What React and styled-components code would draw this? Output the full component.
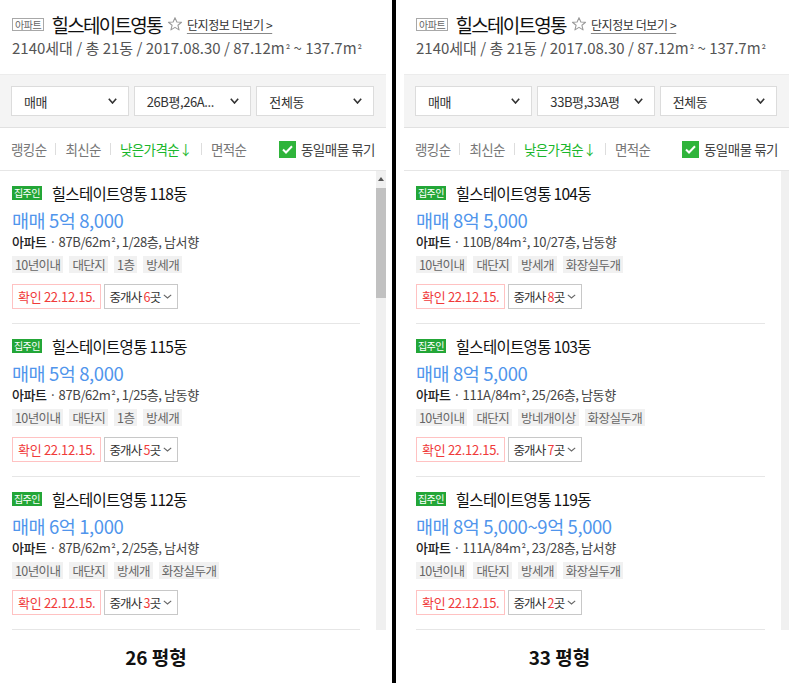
import React from "react";
import styled, { createGlobalStyle } from "styled-components";

const GlobalStyle = createGlobalStyle`
  html, body {
    margin: 0;
    padding: 0;
    background: #fff;
  }
  body {
    font-family: "Noto Sans CJK KR", "Noto Sans", sans-serif;
    color: #222;
  }
`;

const Page = styled.div`
  display: flex;
  height: 683px;
  overflow: hidden;
`;

const Column = styled.div`
  width: ${(p) => p.$w}px;
  display: flex;
  flex-direction: column;
`;

const Divider = styled.div`
  width: 4px;
  background: #000;
  margin: 0 8px 0 6px;
`;

const Panel = styled.div`
  height: 630px;
  display: flex;
  flex-direction: column;
  overflow: hidden;
`;

// header with complex name
const Header = styled.div`
  height: 74px;
  box-sizing: border-box;
  padding: 12px 12px 0;
`;

const TitleRow = styled.div`
  display: flex;
  align-items: center;
  height: 24px;
  white-space: nowrap;
`;

const TypeBadge = styled.span`
  border: 1px solid #a8a8a8;
  color: #666;
  font-size: 10px;
  line-height: 11px;
  letter-spacing: -0.4px;
  padding: 0 2px;
  margin-right: 7px;
`;

const ComplexName = styled.span`
  font-size: 19px;
  letter-spacing: -1.7px;
  color: #111;
`;

const Star = styled.svg`
  margin: 0 4px 0 5px;
`;

const MoreLink = styled.a`
  font-size: 12px;
  letter-spacing: -0.4px;
  color: #333;
  text-decoration: underline;
  text-decoration-color: #888;
  text-underline-offset: 3px;
`;

const SubInfo = styled.div`
  margin-top: 2px;
  font-size: 15px;
  line-height: 20px;
  letter-spacing: 0;
  color: #555;
  white-space: nowrap;
`;

const Unit = styled.span`
  font-size: 11px;
  letter-spacing: 0;
  margin-left: 1px;
`;

const FilterBar = styled.div`
  background: #f4f4f4;
  border-top: 1px solid #ececec;
  border-bottom: 1px solid #e1e1e1;
  padding: 11px 12px 11px 11px;
  display: grid;
  grid-template-columns: repeat(3, 1fr);
  gap: 5px;
`;

const Select = styled.div`
  height: 30px;
  box-sizing: border-box;
  background: #fff;
  border: 1px solid #dcdcdc;
  display: flex;
  align-items: center;
  justify-content: space-between;
  padding: 0 11px 0 12px;
  font-size: 13px;
  letter-spacing: -0.4px;
  color: #333;
  white-space: nowrap;
`;

const SortBar = styled.div`
  height: 42px;
  border-bottom: 1px solid #e6e6e6;
  display: flex;
  align-items: center;
  padding: 0 11px;
`;

const SortItem = styled.span`
  font-size: 13.5px;
  letter-spacing: -0.6px;
  color: ${(p) => (p.$active ? "#19b62b" : "#777")};
  white-space: nowrap;
`;

const SortSep = styled.span`
  width: 1px;
  height: 12px;
  background: #ddd;
  margin: 0 9px;
`;

const Bundle = styled.label`
  margin-left: auto;
  display: flex;
  align-items: center;
  gap: 5px;
  font-size: 13.5px;
  letter-spacing: -0.5px;
  color: #444;
  white-space: nowrap;
`;

const CheckBox = styled.span`
  width: 17px;
  height: 17px;
  background: #2fb43b;
  display: flex;
  align-items: center;
  justify-content: center;
`;

const ListWrap = styled.div`
  flex: 1;
  min-height: 0;
  display: flex;
`;

const List = styled.div`
  flex: 1;
  overflow: hidden;
  padding: 0 ${(p) => p.$pr}px 0 12px;
`;

const Scrollbar = styled.div`
  width: ${(p) => p.$w}px;
  background: #f0f0f0;
  display: flex;
  flex-direction: column;
  align-items: center;
`;

const ScrollArrow = styled.span`
  margin-top: 6px;
  width: 0;
  height: 0;
  border-left: 3px solid transparent;
  border-right: 3px solid transparent;
  border-bottom: 4px solid #555;
`;

const Thumb = styled.div`
  margin-top: 7px;
  width: 100%;
  height: 110px;
  background: #c1c1c1;
`;

const Item = styled.div`
  padding: 11px 0 14px;
  border-bottom: 1px solid #e6e6e6;
`;

const ItemTitle = styled.div`
  display: flex;
  align-items: center;
  height: 22px;
  font-size: 15.5px;
  letter-spacing: -0.7px;
  color: #111;
  white-space: nowrap;
`;

const OwnerBadge = styled.span`
  background: #23a637;
  color: #fff;
  font-size: 10px;
  letter-spacing: -0.6px;
  line-height: 14px;
  padding: 0 2px;
  margin-right: 10px;
`;

const Price = styled.div`
  margin-top: 4px;
  font-size: 18.5px;
  line-height: 24px;
  letter-spacing: -0.4px;
  color: #5095ec;
  white-space: nowrap;
`;

const Detail = styled.div`
  font-size: 13px;
  line-height: 20px;
  letter-spacing: -0.4px;
  color: #444;
  white-space: nowrap;
  b {
    font-weight: 500;
    color: #222;
  }
`;

const Tags = styled.div`
  margin-top: 4px;
  display: flex;
  gap: 6px;
`;

const Tag = styled.span`
  background: #f1f1f1;
  color: #666;
  font-size: 12.5px;
  letter-spacing: -0.6px;
  line-height: 17px;
  padding: 0 3px;
  white-space: nowrap;
`;

const Actions = styled.div`
  margin-top: 11px;
  display: flex;
  gap: 3px;
`;

const Confirm = styled.span`
  height: 25px;
  box-sizing: border-box;
  border: 1px solid #ffc2c2;
  color: #f03a3a;
  font-size: 13px;
  letter-spacing: -0.3px;
  padding: 0 5px;
  display: flex;
  align-items: center;
  white-space: nowrap;
`;

const Broker = styled.span`
  height: 25px;
  box-sizing: border-box;
  border: 1px solid #c8c8c8;
  color: #333;
  font-size: 12.5px;
  letter-spacing: -0.8px;
  padding: 0 5px 0 4px;
  display: flex;
  align-items: center;
  gap: 3px;
  white-space: nowrap;
  em {
    font-style: normal;
    color: #f03a3a;
  }
`;

const Caption = styled.div`
  flex: 1;
  display: flex;
  align-items: center;
  justify-content: center;
  padding-right: 74px;
  font-size: 19px;
  font-weight: 700;
  color: #111;
`;

const Chevron = ({ w = 9, h = 5, color = "#333", sw = 1.6 }) => (
  <svg width={w} height={h + 1} viewBox={`0 0 ${w} ${h + 1}`}>
    <polyline
      points={`0.8,0.8 ${w / 2},${h} ${w - 0.8},0.8`}
      fill="none"
      stroke={color}
      strokeWidth={sw}
    />
  </svg>
);

const m2 = (
  <>
    m<Unit>²</Unit>
  </>
);

const panels = [
  {
    label: "26 평형",
    size: "26B평,26A...",
    scroll: 10,
    pr: 16,
    thumb: true,
    items: [
      { dong: "118동", price: "매매 5억 8,000", area: "87B/62", floor: "1/28층, 남서향", tags: ["10년이내", "대단지", "1층", "방세개"], brokers: 6 },
      { dong: "115동", price: "매매 5억 8,000", area: "87B/62", floor: "1/25층, 남동향", tags: ["10년이내", "대단지", "1층", "방세개"], brokers: 5 },
      { dong: "112동", price: "매매 6억 1,000", area: "87B/62", floor: "2/25층, 남서향", tags: ["10년이내", "대단지", "방세개", "화장실두개"], brokers: 3 },
    ],
  },
  {
    label: "33 평형",
    size: "33B평,33A평",
    scroll: 8,
    pr: 16,
    thumb: false,
    items: [
      { dong: "104동", price: "매매 8억 5,000", area: "110B/84", floor: "10/27층, 남동향", tags: ["10년이내", "대단지", "방세개", "화장실두개"], brokers: 8 },
      { dong: "103동", price: "매매 8억 5,000", area: "111A/84", floor: "25/26층, 남동향", tags: ["10년이내", "대단지", "방네개이상", "화장실두개"], brokers: 7 },
      { dong: "119동", price: "매매 8억 5,000~9억 5,000", area: "111A/84", floor: "23/28층, 남서향", tags: ["10년이내", "대단지", "방세개", "화장실두개"], brokers: 2 },
    ],
  },
];

function Listing({ item }) {
  return (
    <Item>
      <ItemTitle>
        <OwnerBadge>집주인</OwnerBadge>
        힐스테이트영통 {item.dong}
      </ItemTitle>
      <Price>{item.price}</Price>
      <Detail>
        <b>아파트</b> · {item.area}m<Unit>²</Unit>, {item.floor}
      </Detail>
      <Tags>
        {item.tags.map((t) => (
          <Tag key={t}>{t}</Tag>
        ))}
      </Tags>
      <Actions>
        <Confirm>확인 22.12.15.</Confirm>
        <Broker>
          <span>
            중개사 <em>{item.brokers}</em>곳
          </span>
          <Chevron w={9} h={4} color="#666" sw={1.1} />
        </Broker>
      </Actions>
    </Item>
  );
}

function EstatePanel({ data }) {
  return (
    <Panel>
      <Header>
        <TitleRow>
          <TypeBadge>아파트</TypeBadge>
          <ComplexName>힐스테이트영통</ComplexName>
          <Star width="16" height="16" viewBox="0 0 24 24">
            <polygon
              points="12,2.5 14.8,9 21.8,9.4 16.4,13.9 18.1,20.8 12,17 5.9,20.8 7.6,13.9 2.2,9.4 9.2,9"
              fill="none"
              stroke="#9a9a9a"
              strokeWidth="1.6"
              strokeLinejoin="round"
            />
          </Star>
          <MoreLink>단지정보 더보기 &gt;</MoreLink>
        </TitleRow>
        <SubInfo>
          2140세대 / 총 21동 / 2017.08.30 / 87.12{m2} ~ 137.7{m2}
        </SubInfo>
      </Header>

      <FilterBar>
        <Select>
          매매 <Chevron />
        </Select>
        <Select>
          {data.size} <Chevron />
        </Select>
        <Select>
          전체동 <Chevron />
        </Select>
      </FilterBar>

      <SortBar>
        <SortItem>랭킹순</SortItem>
        <SortSep />
        <SortItem>최신순</SortItem>
        <SortSep />
        <SortItem $active>낮은가격순↓</SortItem>
        <SortSep />
        <SortItem>면적순</SortItem>
        <Bundle>
          <CheckBox>
            <svg width="11" height="9" viewBox="0 0 11 9">
              <polyline points="1,4.5 4,7.5 10,1.2" fill="none" stroke="#fff" strokeWidth="2" />
            </svg>
          </CheckBox>
          동일매물 묶기
        </Bundle>
      </SortBar>

      <ListWrap>
        <List $pr={data.pr}>
          {data.items.map((it) => (
            <Listing key={it.dong} item={it} />
          ))}
        </List>
        <Scrollbar $w={data.scroll}>
          {data.thumb && (
            <>
              <ScrollArrow />
              <Thumb />
            </>
          )}
        </Scrollbar>
      </ListWrap>
    </Panel>
  );
}

export default function App() {
  return (
    <Page>
      <GlobalStyle />
      <Column $w={386}>
        <EstatePanel data={panels[0]} />
        <Caption>{panels[0].label}</Caption>
      </Column>
      <Divider />
      <Column $w={385}>
        <EstatePanel data={panels[1]} />
        <Caption>{panels[1].label}</Caption>
      </Column>
    </Page>
  );
}
